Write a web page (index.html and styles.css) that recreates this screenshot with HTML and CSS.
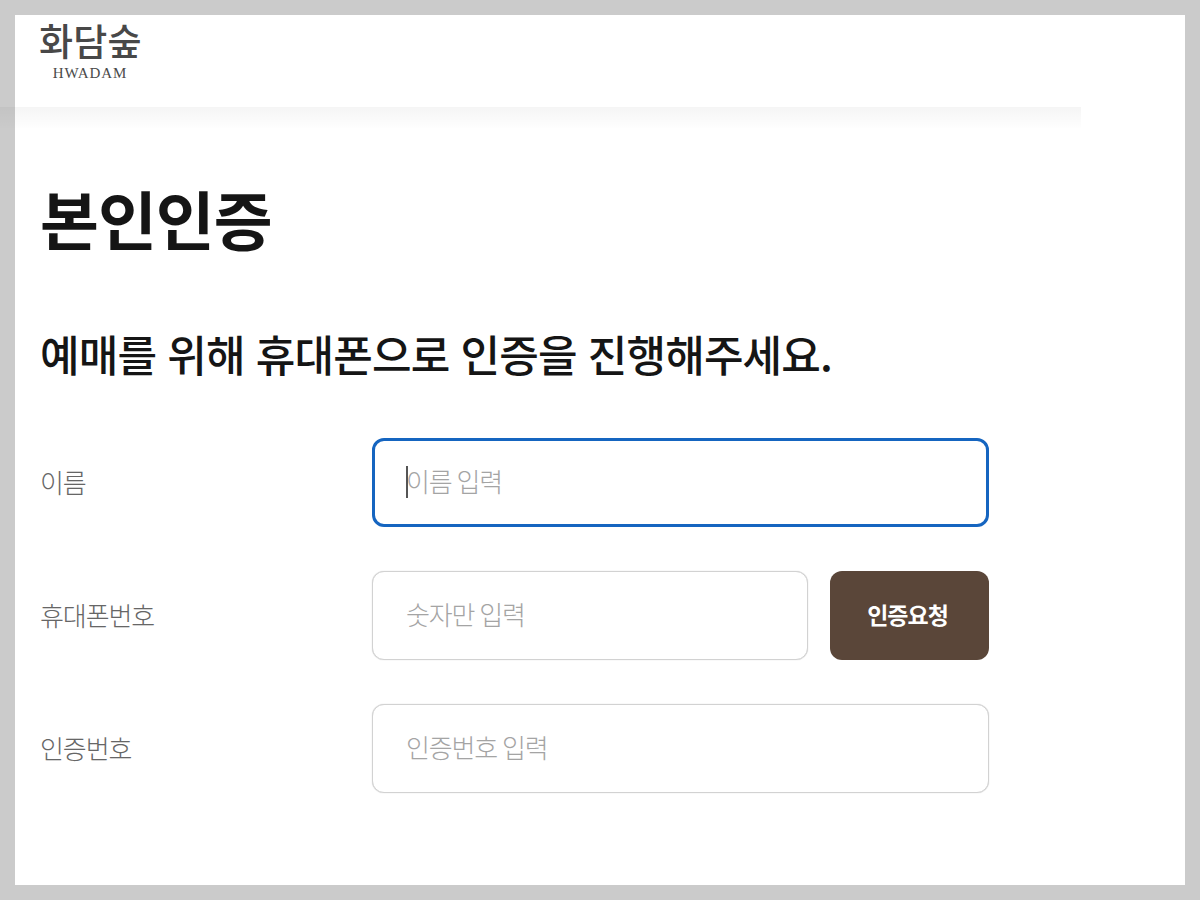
FILE: index.html
```html
<!DOCTYPE html>
<html lang="ko">
<head>
<meta charset="utf-8">
<title>본인인증</title>
<link rel="stylesheet" href="styles.css">
</head>
<body>
<div class="frame">
  <header class="header">
    <div class="logo">
      <div class="logo-ko">화담숲</div>
      <div class="logo-en">HWADAM</div>
    </div>
  </header>
  <div class="shade"></div>
  <main class="content">
    <h1 class="title">본인인증</h1>
    <h2 class="subtitle">예매를 위해 휴대폰으로 인증을 진행해주세요.</h2>
    <form class="form">
      <div class="row">
        <label class="label" for="name">이름</label>
        <div class="control">
          <div class="field-wrap">
            <input class="input input-focus" id="name" type="text" placeholder="이름 입력">
            <span class="caret"></span>
          </div>
        </div>
      </div>
      <div class="row">
        <label class="label" for="phone">휴대폰번호</label>
        <div class="control">
          <div class="field-wrap">
            <input class="input" id="phone" type="text" placeholder="숫자만 입력">
          </div>
          <button class="btn" type="button">인증요청</button>
        </div>
      </div>
      <div class="row">
        <label class="label" for="code">인증번호</label>
        <div class="control">
          <div class="field-wrap">
            <input class="input" id="code" type="text" placeholder="인증번호 입력">
          </div>
        </div>
      </div>
    </form>
  </main>
</div>
</body>
</html>
```
FILE: styles.css
```css
* { box-sizing: border-box; }
html, body { margin: 0; padding: 0; }
body {
  background: #cbcbcb;
  padding: 15px;
  height: 900px;
  overflow: hidden;
  font-family: "Noto Sans CJK KR", "Noto Sans", sans-serif;
}
.frame {
  background: #fff;
  height: 870px;
}
.header {
  height: 92px;
  padding: 3px 0 0 24px;
}
.logo { width: 102px; }
.logo-ko {
  font-size: 37px;
  line-height: 44px;
  font-weight: 500;
  color: #484848;
  letter-spacing: 0.2px;
  white-space: nowrap;
}
.logo-en {
  font-family: "Liberation Serif", serif;
  font-size: 15px;
  line-height: 14px;
  color: #4a4a4a;
  text-align: center;
  letter-spacing: 0.9px;
  margin-top: 4px;
}
.shade {
  height: 21px;
  width: 1081px;
  margin-left: -15px;
  background: linear-gradient(to bottom, rgba(0,0,0,0.04), rgba(0,0,0,0.005));
}
.content { padding: 0 0 0 25px; }
.title {
  margin: 53px 0 0;
  font-size: 64px;
  line-height: 72px;
  font-weight: 700;
  color: #151515;
  letter-spacing: -1px;
}
.subtitle {
  margin: 73px 0 0;
  font-size: 43px;
  line-height: 54px;
  font-weight: 500;
  color: #151515;
  letter-spacing: -0.86px;
  white-space: nowrap;
}
.form {
  margin-top: 58px;
  display: flex;
  flex-direction: column;
  gap: 44px;
}
.row {
  display: flex;
  align-items: center;
  height: 89px;
}
.label {
  width: 332px;
  font-size: 26px;
  font-weight: 300;
  color: #666;
  letter-spacing: -1.1px;
  padding-bottom: 3px;
}
.control {
  width: 617px;
  display: flex;
  gap: 22px;
  height: 89px;
}
.field-wrap {
  position: relative;
  flex: 1;
}
.input {
  width: 100%;
  height: 100%;
  border: 1px solid #d2d2d2;
  box-shadow: 0 0 1px #c4c4c4;
  border-radius: 12px;
  padding: 0 33px 5px;
  font-family: inherit;
  font-size: 26px;
  font-weight: 300;
  letter-spacing: -1.2px;
  word-spacing: -1px;
  color: #222;
  background: #fff;
  outline: none;
}
.input::placeholder { color: #a4a4a4; opacity: 1; }
.input-focus { border: 3px solid #1565c0; padding: 0 31px 5px; box-shadow: none; }
.caret {
  position: absolute;
  left: 34px;
  top: 28px;
  width: 2px;
  height: 32px;
  background: #555;
}
.btn {
  width: 159px;
  height: 89px;
  border: 0;
  border-radius: 12px;
  background: #5a4639;
  color: #fff;
  font-family: inherit;
  font-size: 23px;
  font-weight: 700;
  letter-spacing: -1px;
  padding: 0 4px 4px 0;
}
```
